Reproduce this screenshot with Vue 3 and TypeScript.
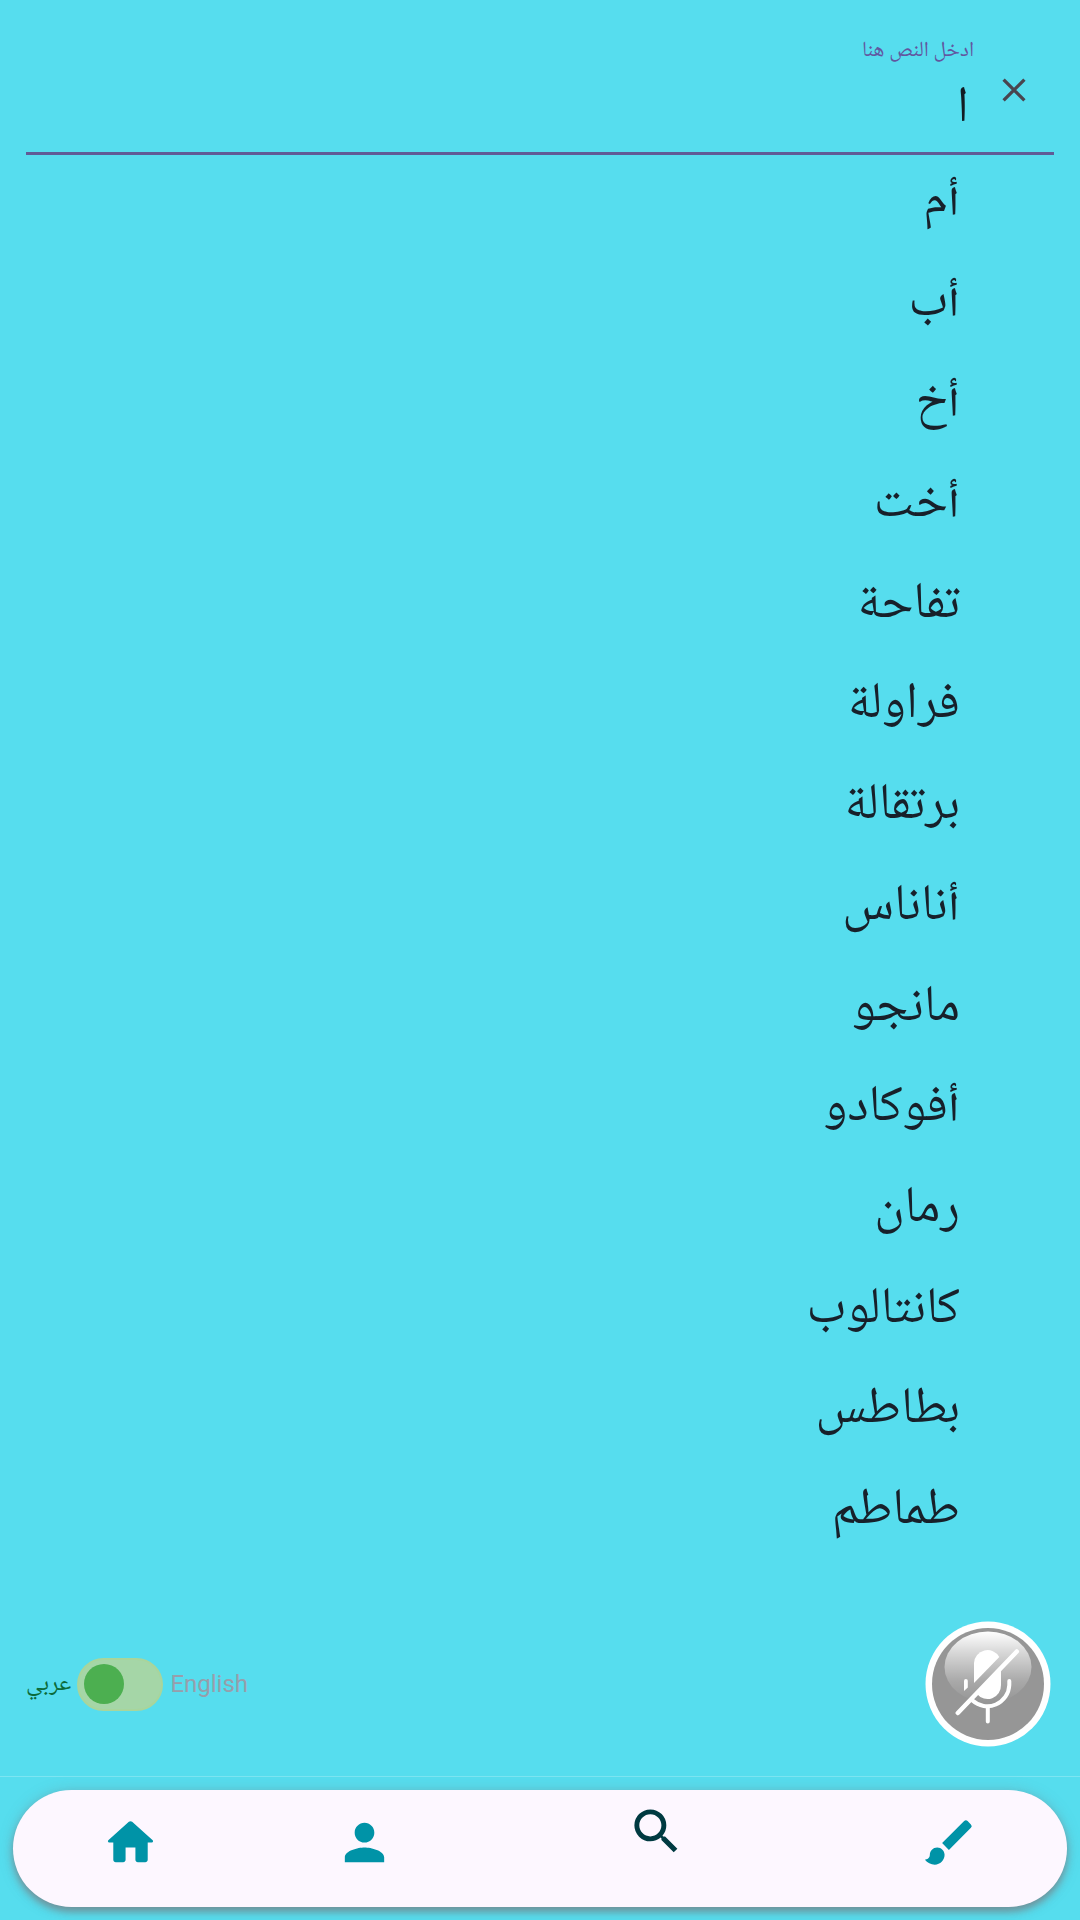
<script setup lang="ts">
const words: string[] = [
  'أم',
  'أب',
  'أخ',
  'أخت',
  'تفاحة',
  'فراولة',
  'برتقالة',
  'أناناس',
  'مانجو',
  'أفوكادو',
  'رمان',
  'كانتالوب',
  'بطاطس',
  'طماطم',
]
</script>

<template>
  <main class="screen">
    <header class="field" dir="rtl">
      <button class="clear" aria-label="مسح">
        <svg width="24" height="24" viewBox="0 0 24 24"><path d="M1.6 1.6 22.4 22.4M22.4 1.6 1.6 22.4" fill="none" stroke="#49454f" stroke-width="3.300" /></svg>
      </button>
      <div class="entry">
        <div class="label">ادخل النص هنا</div>
        <div class="value">ا</div>
      </div>
    </header>

    <ul class="words" dir="rtl">
      <li v-for="w in words" :key="w">{{ w }}</li>
    </ul>

    <section class="controls">
      <div class="language">
        <span class="arabic" dir="rtl">عربي</span>
        <div class="switch"><i></i></div>
        <span class="english">English</span>
      </div>
      <svg class="mic" width="126" height="126" viewBox="0 0 126 126">
        <defs>
          <linearGradient id="gloss" x1="0" y1="0" x2="0" y2="1">
            <stop offset="0" stop-color="#fff" />
            <stop offset=".3" stop-color="#fff" stop-opacity=".62" />
            <stop offset=".7" stop-color="#fff" stop-opacity=".18" />
            <stop offset="1" stop-color="#fff" stop-opacity="0" />
          </linearGradient>
        </defs>
        <circle cx="63" cy="63" r="62.5" fill="#fff" />
        <circle cx="63" cy="63" r="56" fill="#969696" />
        <ellipse cx="63" cy="46" rx="43.500" ry="35.500" fill="url(#gloss)" />
        <path d="M49 62V42a13.500 13.500 0 0 1 25.300-6Z" fill="#fff" />
        <path d="M54 71 76 48v16a13.500 13.500 0 0 1-24 9Z" fill="#fff" />
        <path d="m32.800 92 59-61.500" fill="none" stroke="#fff" stroke-width="4.500" stroke-linecap="round" />
        <path d="M47.500 79.500A22 22 0 0 0 84.300 64V60M62.800 86v14.500" fill="none" stroke="#fff" stroke-width="4" stroke-linecap="round" />
        <path d="M39 60q0-2 1.900-2t1.900 2v6.500L39 70Z" fill="#fff" />
      </svg>
    </section>

    <footer class="bottom">
      <nav>
        <a class="home"><svg viewBox="0 0 24 24"><path d="M10 19v-5h4v5c0 .55.45 1 1 1h3c.55 0 1-.45 1-1v-7h1.700c.46 0 .68-.57.33-.87L12.670 3.600c-.38-.34-.96-.34-1.340 0l-8.360 7.530c-.34.3-.13.87.33.87H5v7c0 .55.45 1 1 1h3c.55 0 1-.45 1-1z" /></svg></a>
        <a class="person"><svg viewBox="0 0 24 24"><path d="M12 12c2.210 0 4-1.790 4-4s-1.790-4-4-4-4 1.790-4 4 1.790 4 4 4zm0 2c-2.670 0-8 1.340-8 4v2h16v-2c0-2.660-5.330-4-8-4z" /></svg></a>
        <a class="search"><svg viewBox="0 0 24 24"><path d="M15.500 14h-.79l-.28-.27A6.471 6.471 0 0 0 16 9.500 6.500 6.500 0 1 0 9.500 16c1.610 0 3.090-.59 4.230-1.570l.27.28v.79l5 4.990L20.490 19l-4.990-5zm-6 0C7.010 14 5 11.990 5 9.500S7.010 5 9.500 5 14 7.010 14 9.500 11.990 14 9.500 14z" /></svg></a>
        <a class="brush"><svg viewBox="0 0 24 24"><path d="M7 14c-1.660 0-3 1.340-3 3 0 1.310-1.160 2-2 2 .92 1.220 2.490 2 4 2 2.210 0 4-1.790 4-4 0-1.660-1.340-3-3-3zm13.710-9.370-1.340-1.340a.996.996 0 0 0-1.410 0L9 12.250 11.750 15l8.960-8.960a.996.996 0 0 0 0-1.410z" /></svg></a>
      </nav>
    </footer>
  </main>
</template>

<style>
body {
  background: #56ddee;
}
</style>

<style scoped>
.screen {
  box-sizing: border-box;
  width: 1080px;
  height: 1920px;
  overflow: hidden;
  display: flex;
  flex-direction: column;
  background: #56ddee;
  font-family: 'Noto Naskh Arabic UI', 'Noto Naskh Arabic', 'Noto Sans Arabic', 'DejaVu Sans', sans-serif;
}
.field {
  box-sizing: border-box;
  height: 155px;
  margin: 0 26px;
  padding-right: 28px;
  border-bottom: 3px solid #605b96;
  display: flex;
}
.clear {
  padding: 0;
  border: 0;
  background: none;
  width: 24px;
  height: 24px;
  margin-top: 78px;
}
.clear svg {
  display: block;
}
.entry {
  margin-right: 28px;
  padding-top: 36px;
}
.label {
  height: 30px;
  line-height: 30px;
  font-size: 21.500px;
  white-space: nowrap;
  color: #6256a0;
}
.value {
  height: 62px;
  line-height: 62px;
  padding-right: 5px;
  margin-top: 11px;
  font-size: 51px;
  color: #121c24;
}
.words {
  list-style: none;
  margin: 0;
  padding: 0 120px 0 0;
  height: 1410px;
  margin-top: -4px;
}
.words li {
  height: 100.700px;
  line-height: 100.700px;
  font-size: 51px;
  color: #17202a;
}
.controls {
  height: 126px;
  margin-top: 60px;
  padding: 0 29.500px 0 26px;
  display: flex;
  align-items: center;
  justify-content: space-between;
}
.language {
  display: flex;
  align-items: center;
}
.arabic {
  width: 45px;
  font-size: 24px;
  line-height: 30px;
  color: #0b6b3a;
}
.switch {
  box-sizing: border-box;
  width: 86px;
  height: 53px;
  margin: 0 7px 0 6.400px;
  padding: 0 4.500px;
  display: flex;
  align-items: center;
  border: 2px solid #a9d59b;
  border-radius: 27px;
  background: #a5d6a7;
}
.switch i {
  width: 40px;
  height: 40px;
  border-radius: 50%;
  background: #4caf50;
}
.english {
  font: 24px/30px Roboto, sans-serif;
  color: #979eab;
}
.mic {
  display: block;
}
.bottom {
  box-sizing: border-box;
  height: 144px;
  margin-top: 29px;
  padding: 12.500px 13px 0;
  border-top: 1px solid #7ce5f2;
}
.bottom nav {
  box-sizing: border-box;
  height: 117px;
  padding: 23px 87px 0 87.500px;
  display: flex;
  border-radius: 59px;
  background: #fdf7ff;
  box-shadow: 0 5px 7px rgba(125, 105, 110, 0.55), 0 1px 14px rgba(120, 130, 135, 0.35);
}
.bottom a {
  width: 59px;
  height: 59px;
  color: #0093a7;
}
.bottom svg {
  display: block;
  width: 59px;
  height: 59px;
  fill: currentColor;
}
.bottom .person {
  margin-left: 175px;
}
.bottom .search {
  margin: -11px 234px 0 233.500px;
  color: #003a41;
}
</style>
